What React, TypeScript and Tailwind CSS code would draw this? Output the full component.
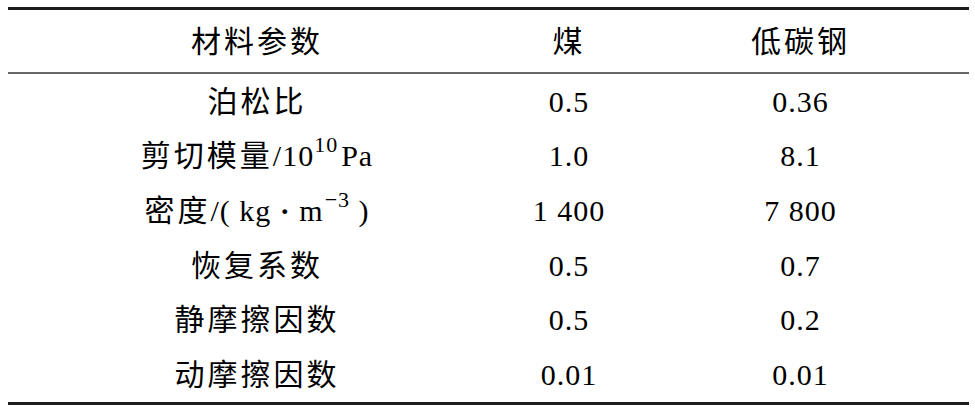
const Cjk = ({ children }: { children: React.ReactNode }) => (
  <span className="tracking-[3px]">{children}</span>
);

const rows: { name: React.ReactNode; coal: string; steel: string }[] = [
  { name: <Cjk>泊松比</Cjk>, coal: "0.5", steel: "0.36" },
  {
    name: (
      <>
        <Cjk>剪切模量</Cjk>/10<sup className="relative -top-[3px] mr-[3px] text-[22px] align-super leading-none">10</sup>Pa
      </>
    ),
    coal: "1.0",
    steel: "8.1",
  },
  {
    name: (
      <>
        <Cjk>密度</Cjk>/(&nbsp;kg&nbsp;<span className="font-bold">·</span>&nbsp;m<sup className="relative -top-[3px] ml-[1px] text-[22px] align-super leading-none">−3</sup>&nbsp;)
      </>
    ),
    coal: "1 400",
    steel: "7 800",
  },
  { name: <Cjk>恢复系数</Cjk>, coal: "0.5", steel: "0.7" },
  { name: <Cjk>静摩擦因数</Cjk>, coal: "0.5", steel: "0.2" },
  { name: <Cjk>动摩擦因数</Cjk>, coal: "0.01", steel: "0.01" },
];

const cols = "grid grid-cols-[498px_126px_337px]";

export default function App() {
  return (
    <div className="h-[414px] w-[975px] bg-white pt-[7px] pl-[8px] text-black [font-family:'Liberation_Serif','Noto_Sans_CJK_SC',serif] text-[30px] tracking-[1px]">
      <div className="w-[961px] border-t-[3px] border-b-[3px] border-[#1c1c1c]">
        <div className={`${cols} h-[64px] items-center border-b-2 border-[#666] text-center`}>
          <div><Cjk>材料参数</Cjk></div>
          <div><Cjk>煤</Cjk></div>
          <div><Cjk>低碳钢</Cjk></div>
        </div>
        {rows.map((r, i) => (
          <div key={i} className={`${cols} h-[54.67px] items-center text-center`}>
            <div>{r.name}</div>
            <div>{r.coal}</div>
            <div>{r.steel}</div>
          </div>
        ))}
      </div>
    </div>
  );
}
